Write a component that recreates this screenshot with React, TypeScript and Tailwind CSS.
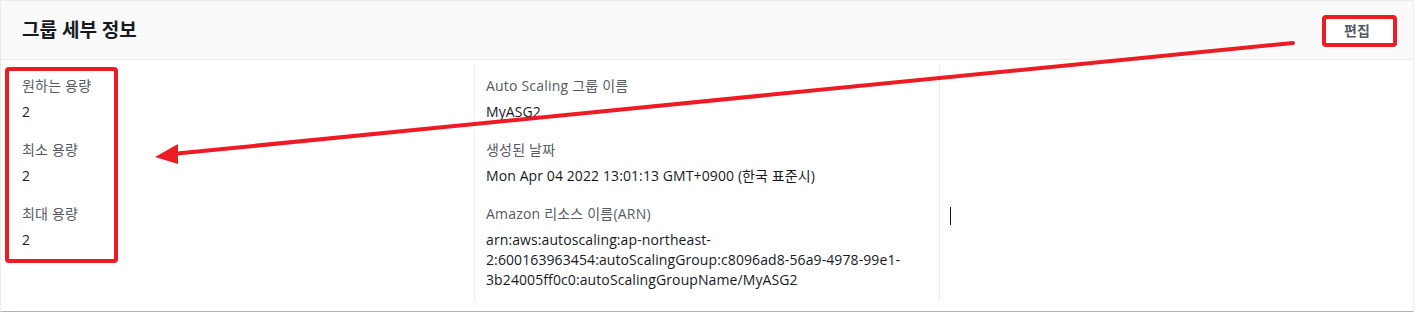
import React from "react";

const font = { fontFamily: '"Open Sans", "Noto Sans CJK KR", sans-serif' };

const Field = ({ label, value, last }: { label: string; value: React.ReactNode; last?: boolean }) => (
	<div className={last ? "" : "mb-[17px]"}>
		<div className="text-[14px] leading-[22px] text-[#545b64] tracking-[0.2px]">{label}</div>
		<div className="mt-[5px] text-[14px] leading-[20px] text-[#16191f] tracking-[0.1px] break-all">{value}</div>
	</div>
);

const App = () => {
	return (
		<div className="relative w-[1416px] h-[313px] bg-white" style={font}>
			<div className="w-[1414px] h-[312px] border border-[#eaeded] border-b-[#aab7b8] bg-white flex flex-col">
				<div className="h-[59px] bg-[#fafafa] border-b border-[#eaeded] flex items-center justify-between pl-[21px] pr-[20px]">
					<h2 className="text-[19px] font-bold text-[#16191f] leading-[24px] mt-[-1px]">그룹 세부 정보</h2>
					<button className="w-[72px] h-[30px] mt-[1px] bg-white text-[14px] font-bold text-[#545b64]">편집</button>
				</div>
				<div className="flex pt-[5px] pb-[10px] flex-1">
					<div className="w-[474px] border-r border-[#eaeded] pl-[21px] pt-[10px]">
						<Field label="원하는 용량" value="2" />
						<Field label="최소 용량" value="2" />
						<Field label="최대 용량" value="2" last />
					</div>
					<div className="w-[465px] border-r border-[#eaeded] pl-[11px] pr-[20px] pt-[10px]">
						<Field label="Auto Scaling 그룹 이름" value="MyASG2" />
						<Field label="생성된 날짜" value="Mon Apr 04 2022 13:01:13 GMT+0900 (한국 표준시)" />
						<Field
							label="Amazon 리소스 이름(ARN)"
							value={
								<>
									arn:aws:autoscaling:ap-northeast-
									<br />
									2:600163963454:autoScalingGroup:c8096ad8-56a9-4978-99e1-
									<br />
									3b24005ff0c0:autoScalingGroupName/MyASG2
								</>
							}
							last
						/>
					</div>
					<div className="flex-1" />
				</div>
			</div>

			{/* annotations */}
			<svg className="absolute inset-0 pointer-events-none" width="1416" height="313">
				<rect x="7" y="69" width="109" height="192" rx="2" fill="none" stroke="#ed1c24" strokeWidth="4" />
				<rect x="1324" y="17" width="71" height="28" rx="2" fill="none" stroke="#ed1c24" strokeWidth="4" />
				<line x1="1293" y1="43" x2="172" y2="154" stroke="#ed1c24" strokeWidth="4" strokeLinecap="round" />
				<polygon points="155,157 178,144 178,164" fill="#ed1c24" />
				<line x1="950.5" y1="207" x2="950.5" y2="225" stroke="#16191f" strokeWidth="1" />
			</svg>
		</div>
	);
};

export default App;
